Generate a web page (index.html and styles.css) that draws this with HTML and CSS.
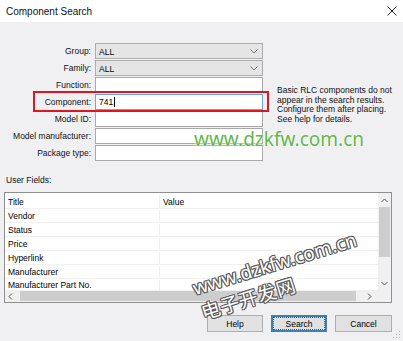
FILE: index.html
```html
<!DOCTYPE html>
<html>
<head>
<meta charset="utf-8">
<link rel="stylesheet" href="styles.css">
</head>
<body>
<div class="window">
  <div class="titlebar">
    <span class="title">Component Search</span>
    <svg class="close" width="10" height="10" viewBox="0 0 10 10"><path d="M0.5 0.5L9.5 9.5M9.5 0.5L0.5 9.5" stroke="#222" stroke-width="1" fill="none"/></svg>
  </div>
  <div class="content">
    <div class="form-area">
      <div class="form">
        <label>Group:</label>
        <div class="select"><span>ALL</span><svg class="chev" width="8" height="5" viewBox="0 0 8 5"><path d="M0.5 0.5L4 4L7.5 0.5" stroke="#777" fill="none"/></svg></div>
        <label>Family:</label>
        <div class="select"><span>ALL</span><svg class="chev" width="8" height="5" viewBox="0 0 8 5"><path d="M0.5 0.5L4 4L7.5 0.5" stroke="#777" fill="none"/></svg></div>
        <label>Function:</label>
        <div class="input"></div>
        <label>Component:</label>
        <div class="input focused"><span>741</span><span class="caret"></span></div>
        <label>Model ID:</label>
        <div class="input"></div>
        <label>Model manufacturer:</label>
        <div class="input"></div>
        <label>Package type:</label>
        <div class="input"></div>
      </div>
      <p class="note">Basic RLC components do not<br>appear in the search results.<br>Configure them after placing.<br>See help for details.</p>
    </div>
    <div class="uf-label">User Fields:</div>
    <div class="gridbox">
      <div class="list">
        <div class="row head"><span class="c1">Title</span><span class="c2">Value</span></div>
        <div class="row"><span class="c1">Vendor</span><span class="c2"></span></div>
        <div class="row"><span class="c1">Status</span><span class="c2"></span></div>
        <div class="row"><span class="c1">Price</span><span class="c2"></span></div>
        <div class="row"><span class="c1">Hyperlink</span><span class="c2"></span></div>
        <div class="row"><span class="c1">Manufacturer</span><span class="c2"></span></div>
        <div class="row last"><span class="c1">Manufacturer Part No.</span><span class="c2"></span></div>
      </div>
      <div class="vscroll">
        <svg width="7" height="5" viewBox="0 0 7 5"><path d="M0.5 4L3.5 1L6.5 4" stroke="#555" fill="none"/></svg>
        <div class="vthumb"></div>
        <div class="vspace"></div>
        <svg width="7" height="5" viewBox="0 0 7 5"><path d="M0.5 1L3.5 4L6.5 1" stroke="#555" fill="none"/></svg>
      </div>
      <div class="hscroll">
        <svg width="5" height="7" viewBox="0 0 5 7"><path d="M4 0.5L1 3.5L4 6.5" stroke="#555" fill="none"/></svg>
        <div class="hthumb"></div>
        <svg width="5" height="7" viewBox="0 0 5 7"><path d="M1 0.5L4 3.5L1 6.5" stroke="#555" fill="none"/></svg>
      </div>
      <div class="corner"></div>
    </div>
    <div class="buttons">
      <button class="btn">Help</button>
      <button class="btn default"><span class="focus">Search</span></button>
      <button class="btn">Cancel</button>
    </div>
  </div>
  <div class="highlight"></div>
  <div class="wm-green">www.dzkfw.com.cn</div>
  <div class="wm-rot">
    <div class="wm-url">www.dzkfw.com.cn</div>
    <div class="wm-cn">电子开发网</div>
  </div>
  <svg class="grip" width="8" height="8" viewBox="0 0 8 8"><g fill="#b5b5b5"><rect x="6" y="0" width="1" height="1"/><rect x="3" y="3" width="1" height="1"/><rect x="6" y="3" width="1" height="1"/><rect x="0" y="6" width="1" height="1"/><rect x="3" y="6" width="1" height="1"/><rect x="6" y="6" width="1" height="1"/></g></svg>
</div>
</body>
</html>
```
FILE: styles.css
```css
* { box-sizing: border-box; }
html, body { margin: 0; padding: 0; }
body {
  width: 403px;
  height: 341px;
  overflow: hidden;
  font-family: "Liberation Sans", Arial, sans-serif;
  font-size: 8.5px;
  color: #000;
}
.window {
  position: relative;
  width: 403px;
  height: 341px;
  background: #f0eff1;
  overflow: hidden;
}
.titlebar {
  height: 22px;
  background: #fff;
  display: flex;
  align-items: center;
  justify-content: space-between;
  padding: 0 6px 0 6px;
}
.title { font-size: 10px; color: #111; }
.form-area { display: flex; align-items: flex-start; }
.content {
  padding: 21px 11px 0 4px;
  display: flex;
  flex-direction: column;
}
.form {
  display: grid;
  grid-template-columns: 87px 168px;
  grid-auto-rows: 16px;
  column-gap: 4px;
  row-gap: 1px;
}
.form label {
  text-align: right;
  line-height: 16px;
  color: #111;
  white-space: nowrap;
}
.select {
  background: #e5e5e5;
  border: 1px solid #adadad;
  display: flex;
  align-items: center;
  justify-content: space-between;
  padding: 0 4px 0 3px;
}
.select span { padding-top: 1px; }
.input {
  background: #fff;
  border: 1px solid #a9a9a9;
  display: flex;
  align-items: center;
  padding: 0 3px;
}
.input.focused { border-color: #6aa9e0; }
.caret { width: 1px; height: 10px; background: #000; margin-left: 1px; }
.note {
  margin: 43px 0 0 14px;
  line-height: 9.6px;
  color: #111;
  white-space: nowrap;
}
.uf-label {
  margin: 14px 0 0 2px;
  line-height: 11px;
  color: #111;
}
.gridbox {
  margin-top: 6px;
  height: 111px;
  border: 1px solid #8f8f8f;
  background: #fff;
  display: grid;
  grid-template-columns: 1fr 13px;
  grid-template-rows: 1fr 12px;
}
.list { overflow: hidden; }
.row {
  display: flex;
  height: 14px;
  line-height: 12px;
  padding-top: 1px;
  border-bottom: 1px solid #f0f0f0;
}
.row.head { height: 16px; line-height: 14px; padding-top: 2px; }
.row.last { height: 12px; line-height: 11px; border-bottom: none; }
.c1 { width: 155px; padding-left: 3px; border-right: 1px solid #f0f0f0; white-space: nowrap; }
.c2 { flex: 1; padding-left: 3px; }
.vscroll {
  background: #f0f0f0;
  display: flex;
  flex-direction: column;
  align-items: center;
  padding: 5px 0 4px;
}
.vthumb { width: 11px; height: 50px; background: #cdcdcd; margin-top: 4px; }
.vspace { flex: 1; }
.hscroll {
  background: #f0f0f0;
  display: flex;
  align-items: center;
  padding: 0 6px 0 3px;
}
.hthumb { flex: 1; height: 10px; background: #cdcdcd; margin: 0 11px 0 7px; }
.corner { background: #f0f0f0; }
.buttons {
  margin-top: 12px;
  display: flex;
  justify-content: flex-end;
  gap: 8px;
}
.btn {
  font-family: "Liberation Sans", Arial, sans-serif;
  font-size: 8.5px;
  color: #000;
  height: 17px;
  background: #e1e1e1;
  border: 1px solid #adadad;
  padding: 0;
  width: 56px;
  display: flex;
  align-items: center;
  justify-content: center;
}
.btn:last-child { width: 57px; }
.btn.default { border-color: #3c7fb1; box-shadow: inset 0 0 0 1px #3c7fb1; padding: 2px; }
.focus { display: flex; align-items: center; justify-content: center; width: 100%; height: 100%; outline: 1px dotted #555; }
.highlight {
  position: absolute;
  left: 33px;
  top: 91px;
  width: 236px;
  height: 21px;
  border: 2px solid #e3141c;
}
.wm-green {
  position: absolute;
  left: 194px;
  top: 127px;
  font-family: "Noto Sans", sans-serif;
  font-size: 19px;
  line-height: 24px;
  color: #62b84a;
  text-shadow: 0 0 2px #fff, 0 0 2px #fff;
}
.wm-rot {
  position: absolute;
  left: 190px;
  top: 278px;
  transform: rotate(-17deg);
  transform-origin: 0 0;
  color: #fff;
  text-shadow: 1px 0 0 #5a5a5a, -1px 0 0 #5a5a5a, 0 1px 0 #5a5a5a, 0 -1px 0 #5a5a5a, 1px 1px 0 #5a5a5a, -1px -1px 0 #5a5a5a, 1px -1px 0 #5a5a5a, -1px 1px 0 #5a5a5a;
}
.wm-url { font-family: "Noto Sans", sans-serif; font-size: 19px; line-height: 22px; }
.wm-cn {
  font-family: "Noto Sans CJK SC", sans-serif;
  font-size: 19px;
  line-height: 22px;
  margin: 3px 0 0 1px;
  letter-spacing: 0.5px;
}
.grip { position: absolute; right: 2px; bottom: 2px; }
```
